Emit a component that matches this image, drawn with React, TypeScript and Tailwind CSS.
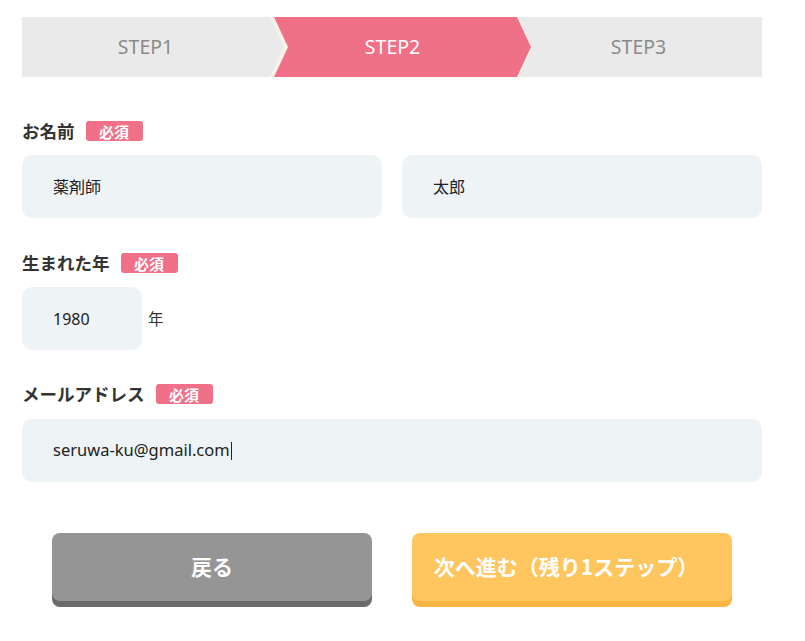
import React from "react";

const jp = { fontFamily: '"Noto Sans CJK JP", "Noto Sans", sans-serif' };
const latin = { fontFamily: '"Noto Sans", "Noto Sans CJK JP", sans-serif' };

function Badge() {
  return (
    <span className="inline-flex h-[20px] w-[57px] items-center justify-center rounded-[3px] bg-[#f07088] text-[15px] font-bold leading-none text-white">
      必須
    </span>
  );
}

function Label({ children }: { children: React.ReactNode }) {
  return (
    <div className="flex h-[20px] items-center gap-[11px]">
      <span className="text-[17.5px] font-bold leading-none text-[#333333]">{children}</span>
      <Badge />
    </div>
  );
}

function Field({ children, className = "" }: { children: React.ReactNode; className?: string }) {
  return (
    <div
      className={`flex h-[63px] items-center rounded-[10px] bg-[#eef3f6] pl-[31px] text-[16px] text-[#222222] ${className}`}
      style={latin}
    >
      {children}
    </div>
  );
}

export default function App() {
  return (
    <div className="min-h-[641px] w-[805px] bg-white" style={jp}>
      <div className="mx-[22px] w-[740px] pt-[17px]">
        {/* Step bar */}
        <div className="flex h-[60px] bg-[#fbf3e7]" style={latin}>
          <div
            className="flex h-full w-[262px] shrink-0 items-center justify-center bg-[#eaeaea] pr-[15px] text-[19.5px] text-[#8a8a8a]"
            style={{ clipPath: "polygon(0 0, calc(100% - 14px) 0, 100% 50%, calc(100% - 14px) 100%, 0 100%)" }}
          >
            STEP1
          </div>
          <div
            className="-ml-[10px] flex h-full w-[257px] shrink-0 items-center justify-center bg-[#f07088] pr-[20px] text-[19.5px] text-white"
            style={{ clipPath: "polygon(0 0, calc(100% - 14px) 0, 100% 50%, calc(100% - 14px) 100%, 0 100%, 14px 50%)" }}
          >
            STEP2
          </div>
          <div
            className="-ml-[12px] flex h-full flex-1 items-center justify-center bg-[#eaeaea] pr-[4px] text-[19.5px] text-[#8a8a8a]"
            style={{ clipPath: "polygon(0 0, 100% 0, 100% 100%, 0 100%, 13px 50%)" }}
          >
            STEP3
          </div>
        </div>

        {/* Name */}
        <div className="mt-[44px]">
          <Label>お名前</Label>
          <div className="mt-[14px] grid grid-cols-2 gap-[20px]">
            <Field>薬剤師</Field>
            <Field>太郎</Field>
          </div>
        </div>

        {/* Birth year */}
        <div className="mt-[35px]">
          <Label>生まれた年</Label>
          <div className="mt-[14px] flex items-center gap-[6px]">
            <Field className="w-[120px]">1980</Field>
            <span className="text-[15.5px] text-[#333333]">年</span>
          </div>
        </div>

        {/* Email */}
        <div className="mt-[34px]">
          <Label>メールアドレス</Label>
          <div className="mt-[15px]">
            <Field>
              <span className="text-[16.5px]">seruwa-ku@gmail.com</span>
              <span className="ml-[1px] inline-block h-[18px] w-px bg-[#222222]" />
            </Field>
          </div>
        </div>

        {/* Buttons */}
        <div className="mt-[51px] flex justify-center gap-[40px]">
          <button className="flex h-[68px] w-[320px] items-center justify-center rounded-[8px] bg-[#959595] text-[21px] font-bold text-white shadow-[0_6px_0_#6b6b6b]">
            戻る
          </button>
          <button className="flex h-[68px] w-[320px] items-center justify-center rounded-[8px] bg-[#ffc65f] pr-[12px] text-[21px] font-bold text-white shadow-[0_6px_0_#fbb543]">
            次へ進む（残り1ステップ）
          </button>
        </div>
      </div>
    </div>
  );
}
